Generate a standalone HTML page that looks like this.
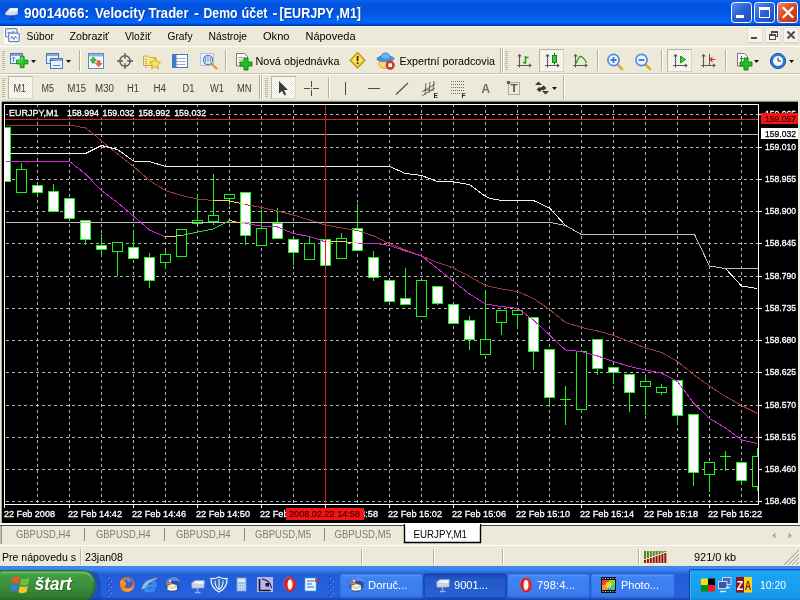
<!DOCTYPE html>
<html lang="sk"><head><meta charset="utf-8"><title>90014066: Velocity Trader - Demo účet - [EURJPY,M1]</title>
<style>html,body{margin:0;padding:0;background:#ece9d8;overflow:hidden}svg{display:block;will-change:transform;transform:translateZ(0)}text{font-family:'Liberation Sans', sans-serif;white-space:pre}</style>
</head><body>
<svg width="800" height="600" viewBox="0 0 800 600">
<defs>
<linearGradient id="gTitle" x1="0" y1="0" x2="0" y2="1">
<stop offset="0" stop-color="#0d62ea"/><stop offset="0.08" stop-color="#075ae6"/><stop offset="0.18" stop-color="#0154e0"/>
<stop offset="0.5" stop-color="#0155e2"/><stop offset="0.68" stop-color="#0260f0"/><stop offset="0.86" stop-color="#0466f8"/><stop offset="0.92" stop-color="#0352e0"/><stop offset="0.97" stop-color="#0238b2"/><stop offset="1" stop-color="#0238b2"/>
</linearGradient>
<linearGradient id="gTask" x1="0" y1="0" x2="0" y2="1">
<stop offset="0" stop-color="#3a7fe6"/><stop offset="0.05" stop-color="#3f8af0"/><stop offset="0.12" stop-color="#3880ea"/><stop offset="0.18" stop-color="#2a6ee0"/>
<stop offset="0.26" stop-color="#245dd8"/><stop offset="0.5" stop-color="#245ddb"/><stop offset="0.86" stop-color="#2562df"/>
<stop offset="0.93" stop-color="#2158d4"/><stop offset="1" stop-color="#1941a5"/>
</linearGradient>
<linearGradient id="gTray" x1="0" y1="0" x2="0" y2="1">
<stop offset="0" stop-color="#168ee4"/><stop offset="0.08" stop-color="#1ba8f6"/><stop offset="0.2" stop-color="#19a2f2"/>
<stop offset="0.6" stop-color="#189ef0"/><stop offset="0.9" stop-color="#1798ea"/><stop offset="1" stop-color="#1282d6"/>
</linearGradient>
<linearGradient id="gStart" x1="0" y1="0" x2="0" y2="1">
<stop offset="0" stop-color="#2f7f2f"/><stop offset="0.08" stop-color="#4fa84c"/><stop offset="0.22" stop-color="#419a41"/>
<stop offset="0.55" stop-color="#3a8e3a"/><stop offset="0.85" stop-color="#317f31"/><stop offset="1" stop-color="#276c27"/>
</linearGradient>
<linearGradient id="gBtnB" x1="0" y1="0" x2="1" y2="1">
<stop offset="0" stop-color="#5b8ef0"/><stop offset="0.5" stop-color="#2a5fd8"/><stop offset="1" stop-color="#1c4cc4"/>
</linearGradient>
<linearGradient id="gBtnR" x1="0" y1="0" x2="1" y2="1">
<stop offset="0" stop-color="#f08a6a"/><stop offset="0.45" stop-color="#dc4a26"/><stop offset="1" stop-color="#b8300e"/>
</linearGradient>
<linearGradient id="gTB" x1="0" y1="0" x2="0" y2="1">
<stop offset="0" stop-color="#5a95f6"/><stop offset="0.15" stop-color="#3f82f2"/><stop offset="0.85" stop-color="#3a7cee"/><stop offset="1" stop-color="#2f68d8"/>
</linearGradient>
<linearGradient id="gTBa" x1="0" y1="0" x2="0" y2="1">
<stop offset="0" stop-color="#1a45ac"/><stop offset="0.2" stop-color="#2258c6"/><stop offset="1" stop-color="#2862d4"/>
</linearGradient>
<pattern id="chk" width="2" height="2" patternUnits="userSpaceOnUse"><rect width="2" height="2" fill="#fff"/><rect width="1" height="1" fill="#ece9d8"/><rect x="1" y="1" width="1" height="1" fill="#ece9d8"/></pattern>
<clipPath id="clipChart"><rect x="5" y="105" width="753" height="399"/></clipPath>
</defs>
<rect x="0" y="0" width="800" height="600" fill="#ece9d8" />
<rect x="0" y="0" width="800" height="26" fill="url(#gTitle)" />
<g>
<path d="M5 13.300 L9.800 8 L18 8 L17.600 14.600 L12 15.600 L5.800 15 Z" fill="#d4dcea"/>
<path d="M8 11.500 L11 8.300 L17.700 8.300 L17.500 11 Z" fill="#f6f8fc"/>
<path d="M5.500 12 L9 8.200 L6.500 8.200 Z" fill="#2a5fd0" opacity="0.5"/>
<path d="M12 15.500 L12 18.500 M9 19.300 L15.300 19.300" stroke="#163c9e" stroke-width="1.400" fill="none"/>
</g>
<text x="25" y="18.8" font-size="14" fill="#0a2a8a" textLength="65" lengthAdjust="spacingAndGlyphs" font-weight="bold" opacity="0.55">90014066:</text>
<text x="24" y="17.8" font-size="14" fill="#ffffff" textLength="65" lengthAdjust="spacingAndGlyphs" font-weight="bold">90014066:</text>
<text x="96" y="18.8" font-size="14" fill="#0a2a8a" textLength="50" lengthAdjust="spacingAndGlyphs" font-weight="bold" opacity="0.55">Velocity</text>
<text x="95" y="17.8" font-size="14" fill="#ffffff" textLength="50" lengthAdjust="spacingAndGlyphs" font-weight="bold">Velocity</text>
<text x="149.5" y="18.8" font-size="14" fill="#0a2a8a" textLength="40.0" lengthAdjust="spacingAndGlyphs" font-weight="bold" opacity="0.55">Trader</text>
<text x="148.5" y="17.8" font-size="14" fill="#ffffff" textLength="40.0" lengthAdjust="spacingAndGlyphs" font-weight="bold">Trader</text>
<text x="195" y="18.8" font-size="14" fill="#0a2a8a" textLength="5" lengthAdjust="spacingAndGlyphs" font-weight="bold" opacity="0.55">-</text>
<text x="194" y="17.8" font-size="14" fill="#ffffff" textLength="5" lengthAdjust="spacingAndGlyphs" font-weight="bold">-</text>
<text x="204.5" y="18.8" font-size="14" fill="#0a2a8a" textLength="34.0" lengthAdjust="spacingAndGlyphs" font-weight="bold" opacity="0.55">Demo</text>
<text x="203.5" y="17.8" font-size="14" fill="#ffffff" textLength="34.0" lengthAdjust="spacingAndGlyphs" font-weight="bold">Demo</text>
<text x="242.5" y="18.8" font-size="14" fill="#0a2a8a" textLength="26.0" lengthAdjust="spacingAndGlyphs" font-weight="bold" opacity="0.55">účet</text>
<text x="241.5" y="17.8" font-size="14" fill="#ffffff" textLength="26.0" lengthAdjust="spacingAndGlyphs" font-weight="bold">účet</text>
<text x="273.5" y="18.8" font-size="14" fill="#0a2a8a" textLength="5.0" lengthAdjust="spacingAndGlyphs" font-weight="bold" opacity="0.55">-</text>
<text x="272.5" y="17.8" font-size="14" fill="#ffffff" textLength="5.0" lengthAdjust="spacingAndGlyphs" font-weight="bold">-</text>
<text x="280.5" y="18.8" font-size="14" fill="#0a2a8a" textLength="54.5" lengthAdjust="spacingAndGlyphs" font-weight="bold" opacity="0.55">[EURJPY</text>
<text x="279.5" y="17.8" font-size="14" fill="#ffffff" textLength="54.5" lengthAdjust="spacingAndGlyphs" font-weight="bold">[EURJPY</text>
<text x="337" y="18.8" font-size="14" fill="#0a2a8a" textLength="25" lengthAdjust="spacingAndGlyphs" font-weight="bold" opacity="0.55">,M1]</text>
<text x="336" y="17.8" font-size="14" fill="#ffffff" textLength="25" lengthAdjust="spacingAndGlyphs" font-weight="bold">,M1]</text>
<rect x="731.5" y="2.5" width="20" height="20" rx="3" ry="3" fill="url(#gBtnB)" stroke="#ffffff" stroke-width="1"/>
<rect x="736" y="15" width="8" height="3" fill="#ffffff" />
<rect x="754.5" y="2.5" width="20" height="20" rx="3" ry="3" fill="url(#gBtnB)" stroke="#ffffff" stroke-width="1"/>
<rect x="759.5" y="8" width="10" height="9.5" fill="none" stroke="#ffffff" stroke-width="1"/>
<rect x="759" y="7" width="11" height="3" fill="#ffffff" />
<rect x="777.5" y="2.5" width="20" height="20" rx="3" ry="3" fill="url(#gBtnR)" stroke="#ffffff" stroke-width="1"/>
<path d="M783.5 8 L792.5 17 M792.5 8 L783.5 17" stroke="#ffffff" stroke-width="2.2" stroke-linecap="square"/>
<rect x="0" y="26" width="800" height="20" fill="#ece9d8" />
<rect x="0" y="26" width="800" height="1" fill="#f4f4f0" />
<rect x="0" y="46" width="800" height="1" fill="#ffffff" />
<rect x="4" y="27" width="16" height="17" fill="#fbfbf8" />
<g fill="#f4f7fd" stroke="#6486c4" stroke-width="1.200">
<rect x="5.600" y="28.600" width="11.500" height="8.400" rx="1"/><rect x="8.600" y="33.200" width="10.600" height="8.400" rx="1"/>
</g>
<path d="M7.500 32.500 h3 M12 31 l1.200 2 l1.200 -2" stroke="#5476b8" stroke-width="0.800" fill="none"/>
<path d="M10.500 38.500 l1.600 -2 l1.600 3 l1.600 -3 l1.600 2" stroke="#3f62aa" stroke-width="0.900" fill="none"/>
<text x="26.5" y="39.6" font-size="11.2" fill="#000" textLength="27.5" lengthAdjust="spacingAndGlyphs">Súbor</text>
<text x="69.5" y="39.6" font-size="11.2" fill="#000" textLength="39.5" lengthAdjust="spacingAndGlyphs">Zobraziť</text>
<text x="125" y="39.6" font-size="11.2" fill="#000" textLength="26" lengthAdjust="spacingAndGlyphs">Vložiť</text>
<text x="167.5" y="39.6" font-size="11.2" fill="#000" textLength="25.0" lengthAdjust="spacingAndGlyphs">Grafy</text>
<text x="208.5" y="39.6" font-size="11.2" fill="#000" textLength="38.5" lengthAdjust="spacingAndGlyphs">Nástroje</text>
<text x="263" y="39.6" font-size="11.2" fill="#000" textLength="26.5" lengthAdjust="spacingAndGlyphs">Okno</text>
<text x="305.5" y="39.6" font-size="11.2" fill="#000" textLength="50.0" lengthAdjust="spacingAndGlyphs">Nápoveda</text>
<rect x="747.5" y="27.5" width="15" height="15" rx="1" fill="#f5f4ec" stroke="#e0ddce" stroke-width="1"/>
<line x1="748" y1="43" x2="763" y2="43" stroke="#d2cebc" stroke-width="1" />
<rect x="751" y="37" width="6" height="2" fill="#4c4c4c" />
<rect x="765.5" y="27.5" width="15" height="15" rx="1" fill="#f5f4ec" stroke="#e0ddce" stroke-width="1"/>
<line x1="766" y1="43" x2="781" y2="43" stroke="#d2cebc" stroke-width="1" />
<g fill="none" stroke="#4c4c4c" stroke-width="1"><rect x="771.5" y="31.5" width="6" height="5"/><rect x="769.5" y="34.5" width="6" height="5" fill="#f5f4ec"/></g>
<rect x="771" y="31" width="7" height="2" fill="#4c4c4c" />
<rect x="769" y="34" width="7" height="2" fill="#4c4c4c" />
<rect x="783.5" y="27.5" width="15" height="15" rx="1" fill="#f5f4ec" stroke="#e0ddce" stroke-width="1"/>
<line x1="784" y1="43" x2="799" y2="43" stroke="#d2cebc" stroke-width="1" />
<path d="M787.5 31.5 L794.5 38.5 M794.5 31.5 L787.5 38.5" stroke="#4c4c4c" stroke-width="2"/>
<rect x="0" y="47" width="800" height="26" fill="#ece9d8" />
<rect x="0" y="73" width="800" height="1" fill="#c9c5b4" />
<rect x="0" y="74" width="800" height="1" fill="#ffffff" />
<rect x="0" y="75" width="800" height="24" fill="#ece9d8" />
<rect x="2" y="51" width="3" height="1" fill="#bdb9a8" />
<rect x="2" y="53" width="3" height="1" fill="#bdb9a8" />
<rect x="2" y="55" width="3" height="1" fill="#bdb9a8" />
<rect x="2" y="57" width="3" height="1" fill="#bdb9a8" />
<rect x="2" y="59" width="3" height="1" fill="#bdb9a8" />
<rect x="2" y="61" width="3" height="1" fill="#bdb9a8" />
<rect x="2" y="63" width="3" height="1" fill="#bdb9a8" />
<rect x="2" y="65" width="3" height="1" fill="#bdb9a8" />
<rect x="2" y="67" width="3" height="1" fill="#bdb9a8" />
<rect x="2" y="69" width="3" height="1" fill="#bdb9a8" />
<g><rect x="10.5" y="53.5" width="12" height="10" fill="#e8f0fa" stroke="#4b78b8"/><rect x="11" y="54" width="11" height="2" fill="#7da7dd"/>
<path d="M13.5 57 v5 M12 58.5 l1.5 -1.5 l1.5 1.5" stroke="#4b78b8" fill="none" stroke-width="0.9"/>
<path d="M20 58 h4 v4 h4 v4 h-4 v4 h-4 v-4 h-4 v-4 h4 z" transform="translate(22.2,62) scale(0.95) translate(-22,-64)" fill="#2cc62c" stroke="#118011" stroke-width="0.9"/><path d="M20.800 57 h1.800 v3.500 h-1.800 z M17 60.800 h3.800 v1.400 h-3.800 z" fill="#7cea7c" opacity="0.8"/></g>
<path d="M31 60 h5 l-2.5 3 z" fill="#111"/>
<g fill="#e8f0fa" stroke="#4b78b8"><rect x="46.5" y="53.5" width="12" height="10"/><rect x="50.5" y="58.5" width="12" height="10"/></g>
<rect x="47" y="54" width="11" height="2" fill="#7da7dd" />
<rect x="51" y="59" width="11" height="2" fill="#7da7dd" />
<path d="M49 60.5 h6 M53 65.5 h7" stroke="#4b78b8" stroke-width="0.9"/>
<path d="M66 60 h5 l-2.5 3 z" fill="#111"/>
<rect x="79" y="50" width="1" height="21" fill="#b4b09e" />
<rect x="80" y="50" width="1" height="21" fill="#ffffff" />
<g><rect x="88.5" y="53.5" width="15" height="15" fill="#f4f8fd" stroke="#5c8ac8"/><rect x="89" y="54" width="14" height="2.5" fill="#8db2e2"/>
<path d="M93.3 57 l3.2 3.400 h-1.800 v2.600 h-2.800 v-2.600 h-1.800 z" fill="#3cc03c" stroke="#1a8a1a" stroke-width="0.6"/>
<path d="M98.700 66.800 l3.200 -3.400 h-1.800 v-2.600 h-2.800 v2.600 h-1.800 z" fill="#f46a48" stroke="#b83a20" stroke-width="0.6"/></g>
<g fill="none" stroke="#5a5a5a"><circle cx="125" cy="61" r="5.2" stroke-width="1.4"/><path d="M125 53 v6 M125 63 v6 M117 61 h6 M127 61 h6" stroke-width="1.3"/></g>
<g><path d="M143.500 56 h5 l1.500 1.500 h6 v8 h-12.500 z" fill="#f8e690" stroke="#c9a33a" stroke-width="0.9"/>
<path d="M146 59 v9" stroke="#6a6a6a" stroke-width="0.8" stroke-dasharray="1 1"/>
<path d="M155 58 l1.700 3.600 l3.900 0.500 l-2.900 2.700 l0.800 3.900 l-3.500 -1.900 l-3.500 1.900 l0.800 -3.900 l-2.900 -2.700 l3.900 -0.500 z" fill="#fbe24a" stroke="#c79a2a" stroke-width="0.8"/></g>
<g><rect x="172.500" y="54.500" width="15" height="13" fill="#fdfdfd" stroke="#4a78b8"/><rect x="173" y="55" width="3.500" height="12" fill="#3b78d0"/>
<path d="M178.500 58.500 h7 M178.500 61.500 h7 M178.500 64.500 h7" stroke="#8f9fb8" stroke-width="0.9"/><path d="M177 58.500 h1 M177 61.500 h1 M177 64.500 h1" stroke="#d04040" stroke-width="1"/></g>
<g><rect x="200.500" y="53.500" width="13" height="12" fill="#eef3fa" stroke="#a9b8d0" stroke-width="0.8"/>
<circle cx="208" cy="60" r="4.600" fill="#dbe9fb" fill-opacity="0.8" stroke="#5a82c0" stroke-width="1.300"/>
<path d="M205.500 57 v5 M208 56 v6 M210.500 57.500 v4" stroke="#4a6ea8" stroke-width="0.8"/>
<path d="M211.500 63.500 l5 5" stroke="#d2a23a" stroke-width="2.200" stroke-linecap="round"/></g>
<rect x="225" y="50" width="1" height="21" fill="#b4b09e" />
<rect x="226" y="50" width="1" height="21" fill="#ffffff" />
<g><path d="M236.500 53.500 h8 l3 3 v9.500 h-11 z" fill="#fbfbfb" stroke="#6a6a6a" stroke-width="0.9"/><path d="M238.500 57.500 h5 M238.500 60 h6 M238.500 62.500 h4" stroke="#8a8a8a" stroke-width="0.9"/>
<path d="M245 60 h4 v4 h4 v4 h-4 v4 h-4 v-4 h-4 v-4 h4 z" transform="translate(-1,-2)" fill="#22c022" stroke="#0f7a0f" stroke-width="0.9"/></g>
<text x="255.5" y="65" font-size="11.2" fill="#000" textLength="84" lengthAdjust="spacingAndGlyphs">Nová objednávka</text>
<g><path d="M357.500 52.500 l7.500 7.700 l-7.500 7.700 l-7.500 -7.700 z" fill="#f6d23a" stroke="#b88a10" stroke-width="1.100"/><path d="M357.500 55.500 l5 4.700 l-5 4.700 l-5 -4.700 z" fill="#fbe675"/>
<rect x="356.7" y="56" width="1.8" height="5.2" fill="#3a2a00" />
<rect x="356.7" y="62.3" width="1.8" height="1.8" fill="#3a2a00" />
</g>
<g><circle cx="384.500" cy="62.800" r="5.600" fill="#f8dc72" stroke="#c79a2a" stroke-width="0.8"/>
<ellipse cx="385.500" cy="58.800" rx="8.600" ry="2.900" fill="#4a9be6" stroke="#2a6ab8" stroke-width="0.7"/><path d="M380.500 58.500 q0.500 -5.500 5 -5.500 q4.500 0 5 5.500 q-5 1.800 -10 0 z" fill="#6ab4f4" stroke="#2a6ab8" stroke-width="0.7"/>
<circle cx="390.200" cy="65.200" r="4.200" fill="#e23a1e" stroke="#a02010" stroke-width="0.6"/><rect x="388.400" y="63.400" width="3.600" height="3.600" fill="#fff"/></g>
<text x="399.5" y="65" font-size="11.2" fill="#000" textLength="95.5" lengthAdjust="spacingAndGlyphs">Expertní poradcovia</text>
<rect x="500" y="48" width="1" height="25" fill="#b4b09e" />
<rect x="501" y="48" width="1" height="25" fill="#ffffff" />
<rect x="502" y="48" width="1" height="25" fill="#b4b09e" />
<rect x="503" y="48" width="1" height="25" fill="#ffffff" />
<rect x="505" y="51" width="3" height="1" fill="#bdb9a8" />
<rect x="505" y="53" width="3" height="1" fill="#bdb9a8" />
<rect x="505" y="55" width="3" height="1" fill="#bdb9a8" />
<rect x="505" y="57" width="3" height="1" fill="#bdb9a8" />
<rect x="505" y="59" width="3" height="1" fill="#bdb9a8" />
<rect x="505" y="61" width="3" height="1" fill="#bdb9a8" />
<rect x="505" y="63" width="3" height="1" fill="#bdb9a8" />
<rect x="505" y="65" width="3" height="1" fill="#bdb9a8" />
<rect x="505" y="67" width="3" height="1" fill="#bdb9a8" />
<rect x="505" y="69" width="3" height="1" fill="#bdb9a8" />
<path d="M519.5 54.5 v13 M517 65.5 h14 M517.8 56.5 l1.700 -2 l1.700 2 M529 63.8 l2 1.700 l-2 1.700" stroke="#5a5a5a" stroke-width="1.100" fill="none"/>
<path d="M525.500 56 v8 M525.500 57.500 h3 M523 62.500 h2.500" stroke="#1fa01f" stroke-width="1.500" fill="none"/>
<rect x="539.5" y="49.5" width="24" height="22" fill="url(#chk)" stroke="#d9d6c8" stroke-width="1"/>
<line x1="539" y1="49.5" x2="564" y2="49.5" stroke="#b9b5a4" stroke-width="1" />
<line x1="539.5" y1="49" x2="539.5" y2="72" stroke="#b9b5a4" stroke-width="1" />
<path d="M547.5 54.5 v13 M545 65.5 h14 M545.8 56.5 l1.700 -2 l1.700 2 M557 63.8 l2 1.700 l-2 1.700" stroke="#5a5a5a" stroke-width="1.100" fill="none"/>
<path d="M554.500 53 v11.500" stroke="#0f7a0f" stroke-width="1"/><rect x="552.500" y="55.500" width="4" height="7" fill="#2ad02a" stroke="#0f7a0f" stroke-width="0.9"/>
<path d="M575.5 54.5 v13 M573 65.5 h14 M573.8 56.5 l1.700 -2 l1.700 2 M585 63.8 l2 1.700 l-2 1.700" stroke="#5a5a5a" stroke-width="1.100" fill="none"/>
<path d="M576 63.500 q3.500 -9 6 -6.500 q2.500 1.500 4.500 6" stroke="#1fa01f" stroke-width="1.400" fill="none"/>
<rect x="597" y="50" width="1" height="21" fill="#b4b09e" />
<rect x="598" y="50" width="1" height="21" fill="#ffffff" />
<path d="M617.0 64 l5 5" stroke="#d9ad3c" stroke-width="2.600" stroke-linecap="round"/>
<circle cx="613.5" cy="60" r="5.600" fill="#eaf3ff" stroke="#4c8ae2" stroke-width="1.600"/>
<path d="M610.5 60 h6 M613.5 57 v6" stroke="#3a78d8" stroke-width="1.800"/>
<path d="M645.0 64 l5 5" stroke="#d9ad3c" stroke-width="2.600" stroke-linecap="round"/>
<circle cx="641.5" cy="60" r="5.600" fill="#eaf3ff" stroke="#4c8ae2" stroke-width="1.600"/>
<path d="M638.5 60 h6" stroke="#3a78d8" stroke-width="1.800"/>
<rect x="661" y="50" width="1" height="21" fill="#b4b09e" />
<rect x="662" y="50" width="1" height="21" fill="#ffffff" />
<rect x="667.5" y="49.5" width="24" height="22" fill="url(#chk)" stroke="#d9d6c8" stroke-width="1"/>
<line x1="667" y1="49.5" x2="692" y2="49.5" stroke="#b9b5a4" stroke-width="1" />
<line x1="667.5" y1="49" x2="667.5" y2="72" stroke="#b9b5a4" stroke-width="1" />
<path d="M675.5 54.5 v13 M673 65.5 h14 M673.8 56.5 l1.700 -2 l1.700 2 M685 63.8 l2 1.700 l-2 1.700" stroke="#5a5a5a" stroke-width="1.100" fill="none"/>
<path d="M680.500 56 v7 l5 -3.500 z" fill="#3ad03a" stroke="#0f8a0f" stroke-width="0.9"/>
<path d="M703.5 54.5 v13 M701 65.5 h14 M701.8 56.5 l1.700 -2 l1.700 2 M713 63.8 l2 1.700 l-2 1.700" stroke="#5a5a5a" stroke-width="1.100" fill="none"/>
<path d="M709.500 54 v11" stroke="#5a5a5a" stroke-width="1"/><path d="M715.500 59.500 h-5 M712.500 57.300 l-2.500 2.200 l2.500 2.200" stroke="#d23a1a" stroke-width="1.200" fill="none"/>
<rect x="725" y="50" width="1" height="21" fill="#b4b09e" />
<rect x="726" y="50" width="1" height="21" fill="#ffffff" />
<g><path d="M737.500 53.500 h7 l3 3 v9.500 h-10 z" fill="#fbfbfb" stroke="#6a6a6a" stroke-width="0.9"/><path d="M741.500 56 v8 M740 58.500 h3" stroke="#555" stroke-width="0.9" fill="none"/>
<path d="M745 60 h4 v4 h4 v4 h-4 v4 h-4 v-4 h-4 v-4 h4 z" transform="translate(-1,-2)" fill="#22c022" stroke="#0f7a0f" stroke-width="0.9"/></g>
<path d="M754 60 h5 l-2.5 3 z" fill="#111"/>
<g><circle cx="778" cy="61" r="7.600" fill="#2f78d8" stroke="#1c4fa8" stroke-width="1"/><circle cx="778" cy="61" r="5" fill="#f4f8ff"/><path d="M778 57.500 v3.500 h3" stroke="#333" stroke-width="1" fill="none"/></g>
<path d="M789 60 h5 l-2.5 3 z" fill="#111"/>
<rect x="2" y="78" width="3" height="1" fill="#bdb9a8" />
<rect x="2" y="80" width="3" height="1" fill="#bdb9a8" />
<rect x="2" y="82" width="3" height="1" fill="#bdb9a8" />
<rect x="2" y="84" width="3" height="1" fill="#bdb9a8" />
<rect x="2" y="86" width="3" height="1" fill="#bdb9a8" />
<rect x="2" y="88" width="3" height="1" fill="#bdb9a8" />
<rect x="2" y="90" width="3" height="1" fill="#bdb9a8" />
<rect x="2" y="92" width="3" height="1" fill="#bdb9a8" />
<rect x="2" y="94" width="3" height="1" fill="#bdb9a8" />
<rect x="2" y="96" width="3" height="1" fill="#bdb9a8" />
<rect x="8.5" y="76.5" width="24" height="22" fill="url(#chk)" stroke="#d9d6c8" stroke-width="1"/>
<line x1="8" y1="76.5" x2="33" y2="76.5" stroke="#b9b5a4" stroke-width="1" />
<line x1="8.5" y1="76" x2="8.5" y2="99" stroke="#b9b5a4" stroke-width="1" />
<text x="13.5" y="91.7" font-size="10" fill="#3c3c3c" textLength="12.5" lengthAdjust="spacingAndGlyphs">M1</text>
<text x="41.5" y="91.7" font-size="10" fill="#3c3c3c" textLength="12.5" lengthAdjust="spacingAndGlyphs">M5</text>
<text x="67.5" y="91.7" font-size="10" fill="#3c3c3c" textLength="18.5" lengthAdjust="spacingAndGlyphs">M15</text>
<text x="95" y="91.7" font-size="10" fill="#3c3c3c" textLength="19" lengthAdjust="spacingAndGlyphs">M30</text>
<text x="127" y="91.7" font-size="10" fill="#3c3c3c" textLength="12" lengthAdjust="spacingAndGlyphs">H1</text>
<text x="153.5" y="91.7" font-size="10" fill="#3c3c3c" textLength="12.5" lengthAdjust="spacingAndGlyphs">H4</text>
<text x="182.5" y="91.7" font-size="10" fill="#3c3c3c" textLength="12.0" lengthAdjust="spacingAndGlyphs">D1</text>
<text x="210" y="91.7" font-size="10" fill="#3c3c3c" textLength="14" lengthAdjust="spacingAndGlyphs">W1</text>
<text x="237" y="91.7" font-size="10" fill="#3c3c3c" textLength="14.5" lengthAdjust="spacingAndGlyphs">MN</text>
<rect x="259" y="75" width="1" height="24" fill="#b4b09e" />
<rect x="260" y="75" width="1" height="24" fill="#ffffff" />
<rect x="261" y="75" width="1" height="24" fill="#b4b09e" />
<rect x="262" y="75" width="1" height="24" fill="#ffffff" />
<rect x="265" y="78" width="3" height="1" fill="#bdb9a8" />
<rect x="265" y="80" width="3" height="1" fill="#bdb9a8" />
<rect x="265" y="82" width="3" height="1" fill="#bdb9a8" />
<rect x="265" y="84" width="3" height="1" fill="#bdb9a8" />
<rect x="265" y="86" width="3" height="1" fill="#bdb9a8" />
<rect x="265" y="88" width="3" height="1" fill="#bdb9a8" />
<rect x="265" y="90" width="3" height="1" fill="#bdb9a8" />
<rect x="265" y="92" width="3" height="1" fill="#bdb9a8" />
<rect x="265" y="94" width="3" height="1" fill="#bdb9a8" />
<rect x="265" y="96" width="3" height="1" fill="#bdb9a8" />
<rect x="271.5" y="76.5" width="24" height="22" fill="url(#chk)" stroke="#d9d6c8" stroke-width="1"/>
<line x1="271" y1="76.5" x2="296" y2="76.5" stroke="#b9b5a4" stroke-width="1" />
<line x1="271.5" y1="76" x2="271.5" y2="99" stroke="#b9b5a4" stroke-width="1" />
<path d="M279 81 v12.500 l3 -2.800 l2.300 4.800 l1.900 -0.900 l-2.300 -4.700 h4.100 z" fill="#3a3a3a"/>
<path d="M311.500 81 v6 M311.500 90 v6 M304 88.500 h6 M313 88.500 h6 M311 88.500 h1" stroke="#4a4a4a" stroke-width="1"/>
<rect x="328" y="77" width="1" height="21" fill="#b4b09e" />
<rect x="329" y="77" width="1" height="21" fill="#ffffff" />
<line x1="345.5" y1="82" x2="345.5" y2="95" stroke="#4a4a4a" stroke-width="1" />
<line x1="368" y1="88.5" x2="380" y2="88.5" stroke="#4a4a4a" stroke-width="1" />
<line x1="396" y1="94.5" x2="408" y2="83" stroke="#4a4a4a" stroke-width="1.1" />
<path d="M422 92 l13 -8 M422 96 l13 -8 M426 83 l-1 12 M430 82 l-1 11 M434 81 l-1 9 M424 90 h10" stroke="#5a5a5a" stroke-width="0.9" fill="none"/>
<text x="433.5" y="97.5" font-size="6.5" fill="#222" font-weight="bold">E</text>
<line x1="451" y1="81.5" x2="464" y2="81.5" stroke="#6a6a6a" stroke-width="1" stroke-dasharray="1 1"/>
<line x1="451" y1="84.5" x2="464" y2="84.5" stroke="#6a6a6a" stroke-width="1" stroke-dasharray="1 1"/>
<line x1="451" y1="87.5" x2="464" y2="87.5" stroke="#6a6a6a" stroke-width="1" stroke-dasharray="1 1"/>
<line x1="451" y1="90.5" x2="464" y2="90.5" stroke="#6a6a6a" stroke-width="1" stroke-dasharray="1 1"/>
<line x1="451" y1="93.5" x2="460" y2="93.5" stroke="#6a6a6a" stroke-width="1" stroke-dasharray="1 1"/>
<text x="461.5" y="97.5" font-size="6.5" fill="#222" font-weight="bold">F</text>
<text x="481.5" y="92.6" font-size="12.5" fill="#6c6c6c" textLength="8.5" lengthAdjust="spacingAndGlyphs" font-weight="bold">A</text>
<rect x="508.500" y="82.500" width="11" height="12" fill="none" stroke="#6a6a6a" stroke-dasharray="1 1"/>
<rect x="507" y="81" width="3" height="3" fill="#5a5a5a" />
<text x="510.2" y="92.3" font-size="10.5" fill="#5a5a5a" textLength="7.6" lengthAdjust="spacingAndGlyphs" font-weight="bold">T</text>
<path d="M535 85 l3.500 -3.500 l3.500 3.500 z M542 91 l3.500 3.500 l3.500 -3.500 z" fill="#3a3a3a"/><path d="M537 89 l3 -2.500 l3 2.500 l-3 2.500 z M541 87.500 l3 -2.500 l3 2.500 l-3 2.500 z" fill="#3a3a3a" transform="translate(-0.500,0.500)"/>
<path d="M552 87 h5 l-2.5 3 z" fill="#111"/>
<rect x="563" y="75" width="1" height="24" fill="#b4b09e" />
<rect x="564" y="75" width="1" height="24" fill="#ffffff" />
<rect x="0" y="99" width="800" height="1" fill="#ece9d8" />
<rect x="0" y="100" width="800" height="1" fill="#dad7c7" />
<rect x="0" y="101" width="800" height="1" fill="#8f8d80" />
<rect x="2" y="102" width="796" height="421" fill="#000000" />
<rect x="0" y="101" width="2" height="424" fill="#ece9d8" />
<rect x="1" y="102" width="1" height="422" fill="#aca899" />
<rect x="798" y="101" width="2" height="424" fill="#ece9d8" />
<rect x="0" y="523" width="800" height="2" fill="#ffffff" />
<g shape-rendering="crispEdges">
<line x1="5" y1="114.5" x2="758" y2="114.5" stroke="#b2b2b2" stroke-width="1" stroke-dasharray="3 3" stroke-dashoffset="5"/>
<line x1="5" y1="147.5" x2="758" y2="147.5" stroke="#b2b2b2" stroke-width="1" stroke-dasharray="3 3" stroke-dashoffset="5"/>
<line x1="5" y1="179.5" x2="758" y2="179.5" stroke="#b2b2b2" stroke-width="1" stroke-dasharray="3 3" stroke-dashoffset="5"/>
<line x1="5" y1="211.5" x2="758" y2="211.5" stroke="#b2b2b2" stroke-width="1" stroke-dasharray="3 3" stroke-dashoffset="5"/>
<line x1="5" y1="243.5" x2="758" y2="243.5" stroke="#b2b2b2" stroke-width="1" stroke-dasharray="3 3" stroke-dashoffset="5"/>
<line x1="5" y1="276.5" x2="758" y2="276.5" stroke="#b2b2b2" stroke-width="1" stroke-dasharray="3 3" stroke-dashoffset="5"/>
<line x1="5" y1="308.5" x2="758" y2="308.5" stroke="#b2b2b2" stroke-width="1" stroke-dasharray="3 3" stroke-dashoffset="5"/>
<line x1="5" y1="340.5" x2="758" y2="340.5" stroke="#b2b2b2" stroke-width="1" stroke-dasharray="3 3" stroke-dashoffset="5"/>
<line x1="5" y1="372.5" x2="758" y2="372.5" stroke="#b2b2b2" stroke-width="1" stroke-dasharray="3 3" stroke-dashoffset="5"/>
<line x1="5" y1="405.5" x2="758" y2="405.5" stroke="#b2b2b2" stroke-width="1" stroke-dasharray="3 3" stroke-dashoffset="5"/>
<line x1="5" y1="437.5" x2="758" y2="437.5" stroke="#b2b2b2" stroke-width="1" stroke-dasharray="3 3" stroke-dashoffset="5"/>
<line x1="5" y1="469.5" x2="758" y2="469.5" stroke="#b2b2b2" stroke-width="1" stroke-dasharray="3 3" stroke-dashoffset="5"/>
<line x1="5" y1="501.5" x2="758" y2="501.5" stroke="#b2b2b2" stroke-width="1" stroke-dasharray="3 3" stroke-dashoffset="5"/>
<line x1="37.5" y1="105" x2="37.5" y2="504" stroke="#b2b2b2" stroke-width="1" stroke-dasharray="3 3" stroke-dashoffset="1"/>
<line x1="69.5" y1="105" x2="69.5" y2="504" stroke="#b2b2b2" stroke-width="1" stroke-dasharray="3 3" stroke-dashoffset="1"/>
<line x1="101.5" y1="105" x2="101.5" y2="504" stroke="#b2b2b2" stroke-width="1" stroke-dasharray="3 3" stroke-dashoffset="1"/>
<line x1="133.5" y1="105" x2="133.5" y2="504" stroke="#b2b2b2" stroke-width="1" stroke-dasharray="3 3" stroke-dashoffset="1"/>
<line x1="165.5" y1="105" x2="165.5" y2="504" stroke="#b2b2b2" stroke-width="1" stroke-dasharray="3 3" stroke-dashoffset="1"/>
<line x1="197.5" y1="105" x2="197.5" y2="504" stroke="#b2b2b2" stroke-width="1" stroke-dasharray="3 3" stroke-dashoffset="1"/>
<line x1="229.5" y1="105" x2="229.5" y2="504" stroke="#b2b2b2" stroke-width="1" stroke-dasharray="3 3" stroke-dashoffset="1"/>
<line x1="261.5" y1="105" x2="261.5" y2="504" stroke="#b2b2b2" stroke-width="1" stroke-dasharray="3 3" stroke-dashoffset="1"/>
<line x1="293.5" y1="105" x2="293.5" y2="504" stroke="#b2b2b2" stroke-width="1" stroke-dasharray="3 3" stroke-dashoffset="1"/>
<line x1="325.5" y1="105" x2="325.5" y2="504" stroke="#b2b2b2" stroke-width="1" stroke-dasharray="3 3" stroke-dashoffset="1"/>
<line x1="357.5" y1="105" x2="357.5" y2="504" stroke="#b2b2b2" stroke-width="1" stroke-dasharray="3 3" stroke-dashoffset="1"/>
<line x1="389.5" y1="105" x2="389.5" y2="504" stroke="#b2b2b2" stroke-width="1" stroke-dasharray="3 3" stroke-dashoffset="1"/>
<line x1="421.5" y1="105" x2="421.5" y2="504" stroke="#b2b2b2" stroke-width="1" stroke-dasharray="3 3" stroke-dashoffset="1"/>
<line x1="453.5" y1="105" x2="453.5" y2="504" stroke="#b2b2b2" stroke-width="1" stroke-dasharray="3 3" stroke-dashoffset="1"/>
<line x1="485.5" y1="105" x2="485.5" y2="504" stroke="#b2b2b2" stroke-width="1" stroke-dasharray="3 3" stroke-dashoffset="1"/>
<line x1="517.5" y1="105" x2="517.5" y2="504" stroke="#b2b2b2" stroke-width="1" stroke-dasharray="3 3" stroke-dashoffset="1"/>
<line x1="549.5" y1="105" x2="549.5" y2="504" stroke="#b2b2b2" stroke-width="1" stroke-dasharray="3 3" stroke-dashoffset="1"/>
<line x1="581.5" y1="105" x2="581.5" y2="504" stroke="#b2b2b2" stroke-width="1" stroke-dasharray="3 3" stroke-dashoffset="1"/>
<line x1="613.5" y1="105" x2="613.5" y2="504" stroke="#b2b2b2" stroke-width="1" stroke-dasharray="3 3" stroke-dashoffset="1"/>
<line x1="645.5" y1="105" x2="645.5" y2="504" stroke="#b2b2b2" stroke-width="1" stroke-dasharray="3 3" stroke-dashoffset="1"/>
<line x1="677.5" y1="105" x2="677.5" y2="504" stroke="#b2b2b2" stroke-width="1" stroke-dasharray="3 3" stroke-dashoffset="1"/>
<line x1="709.5" y1="105" x2="709.5" y2="504" stroke="#b2b2b2" stroke-width="1" stroke-dasharray="3 3" stroke-dashoffset="1"/>
<line x1="741.5" y1="105" x2="741.5" y2="504" stroke="#b2b2b2" stroke-width="1" stroke-dasharray="3 3" stroke-dashoffset="1"/>
</g>
<g shape-rendering="crispEdges">
<line x1="5" y1="134.5" x2="758" y2="134.5" stroke="#b8b8b8" stroke-width="1" />
<line x1="5" y1="119.5" x2="758" y2="119.5" stroke="#d82424" stroke-width="1" />
</g>
<g clip-path="url(#clipChart)">
<g shape-rendering="crispEdges">
<rect x="0.5" y="127.5" width="10" height="54" fill="#ffffff" stroke="#18f418" stroke-width="1"/>
<line x1="21.5" y1="163" x2="21.5" y2="169" stroke="#18f418" stroke-width="1" />
<rect x="16.5" y="169.5" width="10" height="23" fill="#000000" stroke="#18f418" stroke-width="1"/>
<line x1="37.5" y1="192" x2="37.5" y2="196" stroke="#18f418" stroke-width="1" />
<rect x="32.5" y="185.5" width="10" height="7" fill="#ffffff" stroke="#18f418" stroke-width="1"/>
<line x1="53.5" y1="184" x2="53.5" y2="191" stroke="#18f418" stroke-width="1" />
<rect x="48.5" y="191.5" width="10" height="20" fill="#ffffff" stroke="#18f418" stroke-width="1"/>
<rect x="64.5" y="198.5" width="10" height="20" fill="#ffffff" stroke="#18f418" stroke-width="1"/>
<line x1="85.5" y1="239" x2="85.5" y2="245" stroke="#18f418" stroke-width="1" />
<rect x="80.5" y="220.5" width="10" height="19" fill="#ffffff" stroke="#18f418" stroke-width="1"/>
<line x1="101.5" y1="234" x2="101.5" y2="245" stroke="#18f418" stroke-width="1" />
<line x1="101.5" y1="249" x2="101.5" y2="257" stroke="#18f418" stroke-width="1" />
<rect x="96.5" y="245.5" width="10" height="4" fill="#ffffff" stroke="#18f418" stroke-width="1"/>
<line x1="117.5" y1="251" x2="117.5" y2="276" stroke="#18f418" stroke-width="1" />
<rect x="112.5" y="242.5" width="10" height="9" fill="#000000" stroke="#18f418" stroke-width="1"/>
<line x1="133.5" y1="230" x2="133.5" y2="247" stroke="#18f418" stroke-width="1" />
<rect x="128.5" y="247.5" width="10" height="11" fill="#ffffff" stroke="#18f418" stroke-width="1"/>
<line x1="149.5" y1="253" x2="149.5" y2="257" stroke="#18f418" stroke-width="1" />
<line x1="149.5" y1="280" x2="149.5" y2="288" stroke="#18f418" stroke-width="1" />
<rect x="144.5" y="257.5" width="10" height="23" fill="#ffffff" stroke="#18f418" stroke-width="1"/>
<line x1="165.5" y1="249" x2="165.5" y2="254" stroke="#18f418" stroke-width="1" />
<line x1="165.5" y1="262" x2="165.5" y2="269" stroke="#18f418" stroke-width="1" />
<rect x="160.5" y="254.5" width="10" height="8" fill="#000000" stroke="#18f418" stroke-width="1"/>
<rect x="176.5" y="229.5" width="10" height="27" fill="#000000" stroke="#18f418" stroke-width="1"/>
<line x1="197.5" y1="194" x2="197.5" y2="220" stroke="#18f418" stroke-width="1" />
<rect x="192.5" y="220.5" width="10" height="3" fill="#000000" stroke="#18f418" stroke-width="1"/>
<line x1="213.5" y1="174" x2="213.5" y2="215" stroke="#18f418" stroke-width="1" />
<line x1="213.5" y1="221" x2="213.5" y2="225" stroke="#18f418" stroke-width="1" />
<rect x="208.5" y="215.5" width="10" height="6" fill="#000000" stroke="#18f418" stroke-width="1"/>
<line x1="229.5" y1="198" x2="229.5" y2="205" stroke="#18f418" stroke-width="1" />
<rect x="224.5" y="194.5" width="10" height="4" fill="#000000" stroke="#18f418" stroke-width="1"/>
<line x1="245.5" y1="235" x2="245.5" y2="245" stroke="#18f418" stroke-width="1" />
<rect x="240.5" y="192.5" width="10" height="43" fill="#ffffff" stroke="#18f418" stroke-width="1"/>
<line x1="261.5" y1="210" x2="261.5" y2="228" stroke="#18f418" stroke-width="1" />
<rect x="256.5" y="228.5" width="10" height="17" fill="#000000" stroke="#18f418" stroke-width="1"/>
<line x1="277.5" y1="208" x2="277.5" y2="223" stroke="#18f418" stroke-width="1" />
<rect x="272.5" y="223.5" width="10" height="15" fill="#ffffff" stroke="#18f418" stroke-width="1"/>
<line x1="293.5" y1="252" x2="293.5" y2="265" stroke="#18f418" stroke-width="1" />
<rect x="288.5" y="239.5" width="10" height="13" fill="#ffffff" stroke="#18f418" stroke-width="1"/>
<line x1="309.5" y1="236" x2="309.5" y2="243" stroke="#18f418" stroke-width="1" />
<rect x="304.5" y="243.5" width="10" height="16" fill="#000000" stroke="#18f418" stroke-width="1"/>
<rect x="320.5" y="239.5" width="10" height="26" fill="#ffffff" stroke="#18f418" stroke-width="1"/>
<line x1="341.5" y1="233" x2="341.5" y2="238" stroke="#18f418" stroke-width="1" />
<rect x="336.5" y="238.5" width="10" height="20" fill="#000000" stroke="#18f418" stroke-width="1"/>
<line x1="357.5" y1="204" x2="357.5" y2="228" stroke="#18f418" stroke-width="1" />
<rect x="352.5" y="228.5" width="10" height="22" fill="#ffffff" stroke="#18f418" stroke-width="1"/>
<line x1="373.5" y1="251" x2="373.5" y2="257" stroke="#18f418" stroke-width="1" />
<line x1="373.5" y1="277" x2="373.5" y2="281" stroke="#18f418" stroke-width="1" />
<rect x="368.5" y="257.5" width="10" height="20" fill="#ffffff" stroke="#18f418" stroke-width="1"/>
<rect x="384.5" y="280.5" width="10" height="21" fill="#ffffff" stroke="#18f418" stroke-width="1"/>
<line x1="405.5" y1="268" x2="405.5" y2="298" stroke="#18f418" stroke-width="1" />
<rect x="400.5" y="298.5" width="10" height="6" fill="#ffffff" stroke="#18f418" stroke-width="1"/>
<rect x="416.5" y="280.5" width="10" height="36" fill="#000000" stroke="#18f418" stroke-width="1"/>
<line x1="437.5" y1="303" x2="437.5" y2="305" stroke="#18f418" stroke-width="1" />
<rect x="432.5" y="286.5" width="10" height="17" fill="#ffffff" stroke="#18f418" stroke-width="1"/>
<rect x="448.5" y="304.5" width="10" height="19" fill="#ffffff" stroke="#18f418" stroke-width="1"/>
<line x1="469.5" y1="316" x2="469.5" y2="320" stroke="#18f418" stroke-width="1" />
<line x1="469.5" y1="339" x2="469.5" y2="350" stroke="#18f418" stroke-width="1" />
<rect x="464.5" y="320.5" width="10" height="19" fill="#ffffff" stroke="#18f418" stroke-width="1"/>
<line x1="485.5" y1="290" x2="485.5" y2="339" stroke="#18f418" stroke-width="1" />
<rect x="480.5" y="339.5" width="10" height="15" fill="#000000" stroke="#18f418" stroke-width="1"/>
<line x1="501.5" y1="322" x2="501.5" y2="335" stroke="#18f418" stroke-width="1" />
<rect x="496.5" y="310.5" width="10" height="12" fill="#000000" stroke="#18f418" stroke-width="1"/>
<line x1="517.5" y1="314" x2="517.5" y2="329" stroke="#18f418" stroke-width="1" />
<rect x="512.5" y="310.5" width="10" height="4" fill="#000000" stroke="#18f418" stroke-width="1"/>
<line x1="533.5" y1="351" x2="533.5" y2="370" stroke="#18f418" stroke-width="1" />
<rect x="528.5" y="317.5" width="10" height="34" fill="#ffffff" stroke="#18f418" stroke-width="1"/>
<line x1="549.5" y1="397" x2="549.5" y2="407" stroke="#18f418" stroke-width="1" />
<rect x="544.5" y="349.5" width="10" height="48" fill="#ffffff" stroke="#18f418" stroke-width="1"/>
<line x1="565.5" y1="386" x2="565.5" y2="399" stroke="#18f418" stroke-width="1" />
<line x1="565.5" y1="399" x2="565.5" y2="425" stroke="#18f418" stroke-width="1" />
<line x1="560" y1="399.5" x2="571" y2="399.5" stroke="#18f418" stroke-width="1" />
<line x1="581.5" y1="409" x2="581.5" y2="413" stroke="#18f418" stroke-width="1" />
<rect x="576.5" y="351.5" width="10" height="58" fill="#000000" stroke="#18f418" stroke-width="1"/>
<line x1="597.5" y1="368" x2="597.5" y2="375" stroke="#18f418" stroke-width="1" />
<rect x="592.5" y="339.5" width="10" height="29" fill="#ffffff" stroke="#18f418" stroke-width="1"/>
<line x1="613.5" y1="372" x2="613.5" y2="384" stroke="#18f418" stroke-width="1" />
<rect x="608.5" y="367.5" width="10" height="5" fill="#ffffff" stroke="#18f418" stroke-width="1"/>
<line x1="629.5" y1="392" x2="629.5" y2="412" stroke="#18f418" stroke-width="1" />
<rect x="624.5" y="374.5" width="10" height="18" fill="#ffffff" stroke="#18f418" stroke-width="1"/>
<line x1="645.5" y1="374" x2="645.5" y2="381" stroke="#18f418" stroke-width="1" />
<line x1="645.5" y1="386" x2="645.5" y2="415" stroke="#18f418" stroke-width="1" />
<rect x="640.5" y="381.5" width="10" height="5" fill="#000000" stroke="#18f418" stroke-width="1"/>
<line x1="661.5" y1="384" x2="661.5" y2="387" stroke="#18f418" stroke-width="1" />
<line x1="661.5" y1="392" x2="661.5" y2="395" stroke="#18f418" stroke-width="1" />
<rect x="656.5" y="387.5" width="10" height="5" fill="#000000" stroke="#18f418" stroke-width="1"/>
<line x1="677.5" y1="415" x2="677.5" y2="425" stroke="#18f418" stroke-width="1" />
<rect x="672.5" y="380.5" width="10" height="35" fill="#ffffff" stroke="#18f418" stroke-width="1"/>
<line x1="693.5" y1="472" x2="693.5" y2="486" stroke="#18f418" stroke-width="1" />
<rect x="688.5" y="414.5" width="10" height="58" fill="#ffffff" stroke="#18f418" stroke-width="1"/>
<line x1="709.5" y1="474" x2="709.5" y2="492" stroke="#18f418" stroke-width="1" />
<rect x="704.5" y="462.5" width="10" height="12" fill="#000000" stroke="#18f418" stroke-width="1"/>
<line x1="725.5" y1="451" x2="725.5" y2="456" stroke="#18f418" stroke-width="1" />
<line x1="725.5" y1="456" x2="725.5" y2="471" stroke="#18f418" stroke-width="1" />
<line x1="720" y1="456.5" x2="731" y2="456.5" stroke="#18f418" stroke-width="1" />
<line x1="741.5" y1="480" x2="741.5" y2="485" stroke="#18f418" stroke-width="1" />
<rect x="736.5" y="462.5" width="10" height="18" fill="#ffffff" stroke="#18f418" stroke-width="1"/>
<line x1="757.5" y1="448" x2="757.5" y2="456" stroke="#18f418" stroke-width="1" />
<line x1="757.5" y1="486" x2="757.5" y2="491" stroke="#18f418" stroke-width="1" />
<rect x="752.5" y="456.5" width="10" height="30" fill="#000000" stroke="#18f418" stroke-width="1"/>
</g>
<polyline fill="none" shape-rendering="crispEdges" stroke="#9a3a36" stroke-width="1" stroke-linejoin="round" points="5.5,125.0 69.5,125.0 85.5,128.0 93.5,134.0 101.5,141.0 117.5,154.0 133.5,166.5 149.5,180.5 165.5,190.5 181.5,195.5 197.5,199.0 213.5,200.5 229.5,201.0 245.5,204.5 261.5,207.5 277.5,211.0 293.5,215.0 309.5,220.0 325.5,225.0 341.5,228.0 357.5,230.5 373.5,236.0 389.5,243.5 405.5,250.0 421.5,256.0 437.5,262.5 453.5,268.0 469.5,276.5 485.5,285.5 501.5,289.0 517.5,291.5 533.5,298.5 549.5,309.5 565.5,322.5 581.5,327.5 597.5,331.0 613.5,335.5 629.5,341.5 645.5,348.0 661.5,352.5 677.5,361.5 693.5,374.5 709.5,386.0 725.5,396.5 741.5,405.5 757.5,413.5" />
<polyline fill="none" shape-rendering="crispEdges" stroke="#e6e04a" stroke-width="1" stroke-linejoin="round" points="213.5,200.5 229.5,201.0 245.5,204.5" />
<polyline fill="none" shape-rendering="crispEdges" stroke="#f0f0f0" stroke-width="1" stroke-linejoin="round" points="5.5,153.5 85.5,153.5 101.5,145.5 117.5,149.5 133.5,161.0 149.5,161.5 165.5,166.5 389.5,166.5 405.5,173.5 421.5,175.5 437.5,181.5 453.5,182.0 469.5,184.5 485.5,196.5 490.5,198.5 501.5,200.5 533.5,200.5 549.5,208.0 565.5,225.5 581.5,234.5 694.5,234.5 709.5,266.0 725.5,268.5 741.5,286.0 757.5,288.5" />
<polyline fill="none" shape-rendering="crispEdges" stroke="#bdbdbd" stroke-width="1" stroke-linejoin="round" points="5.5,222.5 550.5,222.5 565.5,225.5 581.5,234.5 694.5,234.5 709.5,266.0 725.5,268.5 757.5,268.5" />
<polyline fill="none" shape-rendering="crispEdges" stroke="#d028d4" stroke-width="1" stroke-linejoin="round" points="5.5,161.5 69.5,161.5 85.5,174.0 101.5,190.5 117.5,202.5 133.5,216.0 149.5,230.0 165.5,237.0" />
<polyline fill="none" shape-rendering="crispEdges" stroke="#e6e04a" stroke-width="1" stroke-linejoin="round" points="165.5,237.0 181.5,235.5" />
<polyline fill="none" shape-rendering="crispEdges" stroke="#3ad03a" stroke-width="1" stroke-linejoin="round" points="181.5,235.5 197.5,232.0 213.5,229.0 229.5,220.5" />
<polyline fill="none" shape-rendering="crispEdges" stroke="#e6e04a" stroke-width="1" stroke-linejoin="round" points="229.5,220.5 245.5,224.0" />
<polyline fill="none" shape-rendering="crispEdges" stroke="#d028d4" stroke-width="1" stroke-linejoin="round" points="245.5,223.5 261.5,226.0 277.5,227.0 293.5,233.5 309.5,236.5 325.5,242.0" />
<polyline fill="none" shape-rendering="crispEdges" stroke="#e6e04a" stroke-width="1" stroke-linejoin="round" points="325.5,242.0 341.5,241.5 357.5,243.0" />
<polyline fill="none" shape-rendering="crispEdges" stroke="#d028d4" stroke-width="1" stroke-linejoin="round" points="357.5,243.0 373.5,243.0 389.5,245.5 405.5,251.0 421.5,256.0 437.5,268.5 453.5,281.5 469.5,294.0 485.5,304.0 501.5,306.5 517.5,308.5 533.5,320.0 549.5,335.0 565.5,350.0 581.5,351.5 597.5,356.0 613.5,361.5 629.5,366.5 645.5,370.0 661.5,373.0 677.5,381.5 693.5,403.0 709.5,418.5 725.5,428.0 741.5,440.0 757.5,443.5" />
<line x1="325.5" y1="105" x2="325.5" y2="504" stroke="#d41e1e" stroke-width="1" shape-rendering="crispEdges"/>
</g>
<g shape-rendering="crispEdges">
<line x1="4.5" y1="104" x2="4.5" y2="508" stroke="#ffffff" stroke-width="1" />
<line x1="4" y1="104.5" x2="759" y2="104.5" stroke="#ffffff" stroke-width="1" />
<line x1="758.5" y1="104" x2="758.5" y2="505" stroke="#ffffff" stroke-width="1" />
<line x1="4" y1="504.5" x2="759" y2="504.5" stroke="#ffffff" stroke-width="1" />
<line x1="759" y1="114.5" x2="762" y2="114.5" stroke="#ffffff" stroke-width="1" />
<line x1="759" y1="147.5" x2="762" y2="147.5" stroke="#ffffff" stroke-width="1" />
<line x1="759" y1="179.5" x2="762" y2="179.5" stroke="#ffffff" stroke-width="1" />
<line x1="759" y1="211.5" x2="762" y2="211.5" stroke="#ffffff" stroke-width="1" />
<line x1="759" y1="243.5" x2="762" y2="243.5" stroke="#ffffff" stroke-width="1" />
<line x1="759" y1="276.5" x2="762" y2="276.5" stroke="#ffffff" stroke-width="1" />
<line x1="759" y1="308.5" x2="762" y2="308.5" stroke="#ffffff" stroke-width="1" />
<line x1="759" y1="340.5" x2="762" y2="340.5" stroke="#ffffff" stroke-width="1" />
<line x1="759" y1="372.5" x2="762" y2="372.5" stroke="#ffffff" stroke-width="1" />
<line x1="759" y1="405.5" x2="762" y2="405.5" stroke="#ffffff" stroke-width="1" />
<line x1="759" y1="437.5" x2="762" y2="437.5" stroke="#ffffff" stroke-width="1" />
<line x1="759" y1="469.5" x2="762" y2="469.5" stroke="#ffffff" stroke-width="1" />
<line x1="759" y1="501.5" x2="762" y2="501.5" stroke="#ffffff" stroke-width="1" />
<line x1="69.5" y1="505" x2="69.5" y2="508" stroke="#ffffff" stroke-width="1" />
<line x1="133.5" y1="505" x2="133.5" y2="508" stroke="#ffffff" stroke-width="1" />
<line x1="197.5" y1="505" x2="197.5" y2="508" stroke="#ffffff" stroke-width="1" />
<line x1="261.5" y1="505" x2="261.5" y2="508" stroke="#ffffff" stroke-width="1" />
<line x1="325.5" y1="505" x2="325.5" y2="508" stroke="#ffffff" stroke-width="1" />
<line x1="389.5" y1="505" x2="389.5" y2="508" stroke="#ffffff" stroke-width="1" />
<line x1="453.5" y1="505" x2="453.5" y2="508" stroke="#ffffff" stroke-width="1" />
<line x1="517.5" y1="505" x2="517.5" y2="508" stroke="#ffffff" stroke-width="1" />
<line x1="581.5" y1="505" x2="581.5" y2="508" stroke="#ffffff" stroke-width="1" />
<line x1="645.5" y1="505" x2="645.5" y2="508" stroke="#ffffff" stroke-width="1" />
<line x1="709.5" y1="505" x2="709.5" y2="508" stroke="#ffffff" stroke-width="1" />
</g>
<rect x="8" y="107" width="200" height="11" fill="#000000" />
<text x="9" y="115.8" font-size="9.5" fill="#fff" textLength="49.5" lengthAdjust="spacingAndGlyphs" stroke="#ffffff" stroke-width="0.3">EURJPY,M1</text>
<text x="67" y="115.8" font-size="9.5" fill="#fff" textLength="32" lengthAdjust="spacingAndGlyphs" stroke="#ffffff" stroke-width="0.3">158.994</text>
<text x="102.5" y="115.8" font-size="9.5" fill="#fff" textLength="32" lengthAdjust="spacingAndGlyphs" stroke="#ffffff" stroke-width="0.3">159.032</text>
<text x="138.2" y="115.8" font-size="9.5" fill="#fff" textLength="32" lengthAdjust="spacingAndGlyphs" stroke="#ffffff" stroke-width="0.3">158.992</text>
<text x="174.2" y="115.8" font-size="9.5" fill="#fff" textLength="32" lengthAdjust="spacingAndGlyphs" stroke="#ffffff" stroke-width="0.3">159.032</text>
<text x="765" y="116.8" font-size="9.5" fill="#fff" textLength="31" lengthAdjust="spacingAndGlyphs" stroke="#ffffff" stroke-width="0.3">159.065</text>
<text x="765" y="149.8" font-size="9.5" fill="#fff" textLength="31" lengthAdjust="spacingAndGlyphs" stroke="#ffffff" stroke-width="0.3">159.010</text>
<text x="765" y="181.8" font-size="9.5" fill="#fff" textLength="31" lengthAdjust="spacingAndGlyphs" stroke="#ffffff" stroke-width="0.3">158.955</text>
<text x="765" y="213.8" font-size="9.5" fill="#fff" textLength="31" lengthAdjust="spacingAndGlyphs" stroke="#ffffff" stroke-width="0.3">158.900</text>
<text x="765" y="245.8" font-size="9.5" fill="#fff" textLength="31" lengthAdjust="spacingAndGlyphs" stroke="#ffffff" stroke-width="0.3">158.845</text>
<text x="765" y="278.8" font-size="9.5" fill="#fff" textLength="31" lengthAdjust="spacingAndGlyphs" stroke="#ffffff" stroke-width="0.3">158.790</text>
<text x="765" y="310.8" font-size="9.5" fill="#fff" textLength="31" lengthAdjust="spacingAndGlyphs" stroke="#ffffff" stroke-width="0.3">158.735</text>
<text x="765" y="342.8" font-size="9.5" fill="#fff" textLength="31" lengthAdjust="spacingAndGlyphs" stroke="#ffffff" stroke-width="0.3">158.680</text>
<text x="765" y="374.8" font-size="9.5" fill="#fff" textLength="31" lengthAdjust="spacingAndGlyphs" stroke="#ffffff" stroke-width="0.3">158.625</text>
<text x="765" y="407.8" font-size="9.5" fill="#fff" textLength="31" lengthAdjust="spacingAndGlyphs" stroke="#ffffff" stroke-width="0.3">158.570</text>
<text x="765" y="439.8" font-size="9.5" fill="#fff" textLength="31" lengthAdjust="spacingAndGlyphs" stroke="#ffffff" stroke-width="0.3">158.515</text>
<text x="765" y="471.8" font-size="9.5" fill="#fff" textLength="31" lengthAdjust="spacingAndGlyphs" stroke="#ffffff" stroke-width="0.3">158.460</text>
<text x="765" y="503.8" font-size="9.5" fill="#fff" textLength="31" lengthAdjust="spacingAndGlyphs" stroke="#ffffff" stroke-width="0.3">158.405</text>
<rect x="761" y="113" width="37" height="11" fill="#f41414" />
<text x="765" y="122.0" font-size="9.5" fill="#3a0000" textLength="31" lengthAdjust="spacingAndGlyphs" stroke="#3a0000" stroke-width="0.2">159.057</text>
<rect x="761" y="128" width="37" height="11" fill="#ffffff" />
<text x="765" y="137.3" font-size="9.5" fill="#000" textLength="31" lengthAdjust="spacingAndGlyphs" stroke="#000" stroke-width="0.25">159.032</text>
<text x="4" y="517.4" font-size="9.5" fill="#fff" textLength="51" lengthAdjust="spacingAndGlyphs" stroke="#ffffff" stroke-width="0.3">22 Feb 2008</text>
<text x="68" y="517.4" font-size="9.5" fill="#fff" textLength="54" lengthAdjust="spacingAndGlyphs" stroke="#ffffff" stroke-width="0.3">22 Feb 14:42</text>
<text x="132" y="517.4" font-size="9.5" fill="#fff" textLength="54" lengthAdjust="spacingAndGlyphs" stroke="#ffffff" stroke-width="0.3">22 Feb 14:46</text>
<text x="196" y="517.4" font-size="9.5" fill="#fff" textLength="54" lengthAdjust="spacingAndGlyphs" stroke="#ffffff" stroke-width="0.3">22 Feb 14:50</text>
<text x="260" y="517.4" font-size="9.5" fill="#fff" textLength="54" lengthAdjust="spacingAndGlyphs" stroke="#ffffff" stroke-width="0.3">22 Feb 14:54</text>
<text x="324" y="517.4" font-size="9.5" fill="#fff" textLength="54" lengthAdjust="spacingAndGlyphs" stroke="#ffffff" stroke-width="0.3">22 Feb 14:58</text>
<text x="388" y="517.4" font-size="9.5" fill="#fff" textLength="54" lengthAdjust="spacingAndGlyphs" stroke="#ffffff" stroke-width="0.3">22 Feb 15:02</text>
<text x="452" y="517.4" font-size="9.5" fill="#fff" textLength="54" lengthAdjust="spacingAndGlyphs" stroke="#ffffff" stroke-width="0.3">22 Feb 15:06</text>
<text x="516" y="517.4" font-size="9.5" fill="#fff" textLength="54" lengthAdjust="spacingAndGlyphs" stroke="#ffffff" stroke-width="0.3">22 Feb 15:10</text>
<text x="580" y="517.4" font-size="9.5" fill="#fff" textLength="54" lengthAdjust="spacingAndGlyphs" stroke="#ffffff" stroke-width="0.3">22 Feb 15:14</text>
<text x="644" y="517.4" font-size="9.5" fill="#fff" textLength="54" lengthAdjust="spacingAndGlyphs" stroke="#ffffff" stroke-width="0.3">22 Feb 15:18</text>
<text x="708" y="517.4" font-size="9.5" fill="#fff" textLength="54" lengthAdjust="spacingAndGlyphs" stroke="#ffffff" stroke-width="0.3">22 Feb 15:22</text>
<rect x="286" y="508" width="78" height="12" fill="#f41414" />
<text x="289" y="517.4" font-size="9.5" fill="#3a0000" textLength="71" lengthAdjust="spacingAndGlyphs" stroke="#3a0000" stroke-width="0.2">2008.02.22 14:58</text>
<rect x="0" y="525" width="800" height="20" fill="#ece9d8" />
<rect x="0" y="525" width="800" height="1" fill="#4a4a46" />
<rect x="0.5" y="526" width="1.5" height="18" fill="#9a978a" />
<text x="16" y="538" font-size="11.2" fill="#7f7d73" textLength="54.5" lengthAdjust="spacingAndGlyphs">GBPUSD,H4</text>
<text x="96" y="538" font-size="11.2" fill="#7f7d73" textLength="54.5" lengthAdjust="spacingAndGlyphs">GBPUSD,H4</text>
<text x="176" y="538" font-size="11.2" fill="#7f7d73" textLength="54.5" lengthAdjust="spacingAndGlyphs">GBPUSD,H4</text>
<text x="255" y="538" font-size="11.2" fill="#7f7d73" textLength="56" lengthAdjust="spacingAndGlyphs">GBPUSD,M5</text>
<text x="334.5" y="538" font-size="11.2" fill="#7f7d73" textLength="56.5" lengthAdjust="spacingAndGlyphs">GBPUSD,M5</text>
<rect x="84" y="528" width="1" height="13" fill="#8a887c" />
<rect x="164" y="528" width="1" height="13" fill="#8a887c" />
<rect x="244" y="528" width="1" height="13" fill="#8a887c" />
<rect x="324" y="528" width="1" height="13" fill="#8a887c" />
<path d="M404.5 524 V542.5 H480.5 V524" fill="#ffffff" stroke="#000" stroke-width="1.4"/>
<rect x="405.2" y="523" width="74.6" height="3.5" fill="#ffffff" />
<text x="413.5" y="538" font-size="11.2" fill="#000" textLength="53.5" lengthAdjust="spacingAndGlyphs">EURJPY,M1</text>
<path d="M775.5 532.5 v6 l-3.500 -3 z M788.500 532.500 v6 l3.500 -3 z" fill="#aaa79a"/>
<rect x="0" y="545" width="800" height="1" fill="#ffffff" />
<rect x="0" y="546" width="800" height="20" fill="#ece9d8" />
<rect x="80" y="549" width="1" height="16" fill="#b9b5a4" />
<rect x="81" y="549" width="1" height="16" fill="#ffffff" />
<rect x="361" y="549" width="1" height="16" fill="#b9b5a4" />
<rect x="362" y="549" width="1" height="16" fill="#ffffff" />
<rect x="433" y="549" width="1" height="16" fill="#b9b5a4" />
<rect x="434" y="549" width="1" height="16" fill="#ffffff" />
<rect x="502" y="549" width="1" height="16" fill="#b9b5a4" />
<rect x="503" y="549" width="1" height="16" fill="#ffffff" />
<rect x="638" y="549" width="1" height="16" fill="#b9b5a4" />
<rect x="639" y="549" width="1" height="16" fill="#ffffff" />
<text x="2" y="560.6" font-size="11.2" fill="#000" textLength="74" lengthAdjust="spacingAndGlyphs">Pre nápovedu s</text>
<text x="85" y="560.6" font-size="11.2" fill="#000" textLength="38" lengthAdjust="spacingAndGlyphs">23jan08</text>
<text x="694" y="560.6" font-size="11.2" fill="#000" textLength="42" lengthAdjust="spacingAndGlyphs">921/0 kb</text>
<rect x="644.0" y="551" width="2" height="8" fill="#55861c" />
<rect x="644.0" y="560" width="2" height="3" fill="#981608" />
<rect x="646.9" y="551" width="2" height="7" fill="#55861c" />
<rect x="646.9" y="559" width="2" height="4" fill="#981608" />
<rect x="649.8" y="551" width="2" height="6" fill="#55861c" />
<rect x="649.8" y="558" width="2" height="5" fill="#981608" />
<rect x="652.7" y="551" width="2" height="5" fill="#55861c" />
<rect x="652.7" y="557" width="2" height="6" fill="#981608" />
<rect x="655.6" y="551" width="2" height="4" fill="#55861c" />
<rect x="655.6" y="556" width="2" height="7" fill="#981608" />
<rect x="658.5" y="551" width="2" height="3" fill="#55861c" />
<rect x="658.5" y="555" width="2" height="8" fill="#981608" />
<rect x="661.4" y="551" width="2" height="2" fill="#55861c" />
<rect x="661.4" y="554" width="2" height="9" fill="#981608" />
<rect x="664.3" y="551" width="2" height="1" fill="#55861c" />
<rect x="664.3" y="553" width="2" height="10" fill="#981608" />
<path d="M796 565 L799 562" stroke="#b8b4a2" stroke-width="1.3"/>
<path d="M797 566 L800 563" stroke="#ffffff" stroke-width="0.8"/>
<path d="M792 565 L799 558" stroke="#b8b4a2" stroke-width="1.3"/>
<path d="M793 566 L800 559" stroke="#ffffff" stroke-width="0.8"/>
<path d="M788 565 L799 554" stroke="#b8b4a2" stroke-width="1.3"/>
<path d="M789 566 L800 555" stroke="#ffffff" stroke-width="0.8"/>
<path d="M784 565 L799 550" stroke="#b8b4a2" stroke-width="1.3"/>
<path d="M785 566 L800 551" stroke="#ffffff" stroke-width="0.8"/>
<rect x="0" y="566" width="800" height="34" fill="url(#gTask)" />
<path d="M0 570 H84 Q96 572 97 585 Q96.500 598 86 600 H0 Z" fill="url(#gStart)"/>
<path d="M0 570.500 H84 Q95 572.500 96.500 584" fill="none" stroke="#2a6e2a" stroke-width="1" opacity="0.8"/>
<path d="M2 572.500 H83 Q92 574 94 582" fill="none" stroke="#86d07e" stroke-width="1.600" opacity="0.55"/>
<path d="M88 571 Q99.500 585 88 600 L100 600 Q103 585 97 572 Z" fill="#173a9a" opacity="0.45"/>
<g transform="translate(11.2,576) scale(1.04)">
<path d="M1.500 1.800 Q5 -0.500 8.300 1.600 L7.200 7.600 Q4 5.800 0.500 7.800 Z" fill="#e8562a"/>
<path d="M9.600 2.200 Q13 4.200 17.500 1.800 L16.300 8 Q12 10.200 8.500 8.200 Z" fill="#6cc04a"/>
<path d="M0.200 9 Q3.800 7 7 8.900 L5.800 15 Q2.500 13 -1 15.200 Z" fill="#3a7be0"/>
<path d="M8.200 9.500 Q12 11.500 16 9.300 L14.800 15.500 Q11 17.600 7 15.600 Z" fill="#f6c62a"/>
</g>
<text x="35.6" y="591.2" font-size="18.5" fill="#1a4a1a" textLength="37" lengthAdjust="spacingAndGlyphs" font-weight="bold" font-style="italic" opacity="0.6">štart</text>
<text x="34.8" y="590.2" font-size="18.5" fill="#ffffff" textLength="37" lengthAdjust="spacingAndGlyphs" font-weight="bold" font-style="italic">štart</text>
<rect x="107" y="576.5" width="2" height="2" fill="#1a3fa4" />
<rect x="108" y="577.5" width="1.5" height="1.5" fill="#5f92f2" />
<rect x="109.5" y="579.5" width="2" height="2" fill="#1a3fa4" />
<rect x="110.5" y="580.5" width="1.5" height="1.5" fill="#5f92f2" />
<rect x="107" y="582.5" width="2" height="2" fill="#1a3fa4" />
<rect x="108" y="583.5" width="1.5" height="1.5" fill="#5f92f2" />
<rect x="109.5" y="585.5" width="2" height="2" fill="#1a3fa4" />
<rect x="110.5" y="586.5" width="1.5" height="1.5" fill="#5f92f2" />
<rect x="107" y="588.5" width="2" height="2" fill="#1a3fa4" />
<rect x="108" y="589.5" width="1.5" height="1.5" fill="#5f92f2" />
<rect x="109.5" y="591.5" width="2" height="2" fill="#1a3fa4" />
<rect x="110.5" y="592.5" width="1.5" height="1.5" fill="#5f92f2" />
<rect x="107" y="594.5" width="2" height="2" fill="#1a3fa4" />
<rect x="108" y="595.5" width="1.5" height="1.5" fill="#5f92f2" />
<g><circle cx="127" cy="584.500" r="7.400" fill="#e9781c"/><path d="M121 588 q3 4.500 8.500 3.300 q4 -1.500 4.800 -5.500 q-2 3 -5.500 3.300 q-4 0.300 -7.800 -1.100 z" fill="#f6a62a"/><circle cx="128.200" cy="583.200" r="4.700" fill="#3b5fcc"/><path d="M126 580 q2 -1.500 4.500 -0.800 q-1 1.500 0.500 2.500 q-2 1 -3 -0.200 z" fill="#6f92e6"/><path d="M120.300 581.200 q2.800 -1.200 5 0.800 q1.600 1.800 0.200 3.700 q-1.800 1.500 -4.200 0.300 q-1.500 -2 -1 -4.800 z" fill="#f29420"/><path d="M121.300 579.800 l1.800 1.600 l-2.300 0.600 z" fill="#f6b23a"/></g>
<text x="142.5" y="591.8" font-size="22" fill="#2a86e8" textLength="14.5" lengthAdjust="spacingAndGlyphs" font-weight="bold" font-style="italic" stroke="#5fb0f6" stroke-width="0.400">e</text>
<path d="M141.800 589.500 q1.500 -9 15.500 -11.500 q-9 3.500 -12 9.500" fill="#7ec4fa" stroke="#e8c85a" stroke-width="0.500"/>
<g><circle cx="172.500" cy="584.800" r="7.200" fill="#2c4fa8"/><path d="M165.500 583 q2 -6.500 9.500 -6 q4.500 1 5 5.500 q-3 -2.500 -7 -1.500 q-4.500 0.500 -7.500 2 z" fill="#5b8be0"/><path d="M167.500 585.500 q5 -3 9.500 0 v4.300 q-5 2 -9.500 0 z" fill="#f6f0e2"/><path d="M167.500 585.500 l4.800 3 l4.700 -3" stroke="#c8a24a" stroke-width="0.8" fill="none"/><path d="M166 584.500 q2.500 -2.500 6 -0.500" stroke="#e8862a" stroke-width="1.700" fill="none"/><circle cx="170" cy="581" r="0.900" fill="#fff"/></g>
<g transform="translate(191,580)"><path d="M0.500 3 L4 0.500 L13.500 0.500 L13 8 L1 8.300 Z" fill="#c9d3e4" stroke="#8fa2c4" stroke-width="0.6"/><path d="M2 3.300 L5 1.300 L12.500 1.300 L12 4 Z" fill="#f4f7fb"/><path d="M6.500 8 V11.500 M4 12.500 H9.500" stroke="#9db0d2" stroke-width="1.300" fill="none"/></g>
<path d="M219 577 q4 2 8 1.500 q0.500 9 -8 13.500 q-8.500 -4.500 -8 -13.500 q4 0.500 8 -1.500 z" fill="#2a6ac8" stroke="#e4f0ff" stroke-width="1.300"/><path d="M219 579 v11 M215 580.500 q-0.500 6 4 9 M223 580.500 q0.500 6 -4 9" stroke="#e4f0ff" stroke-width="1.100" fill="none"/>
<g><rect x="236.500" y="577.500" width="10" height="14" rx="1" fill="#9cc0f0" stroke="#4a78c0" stroke-width="0.8"/><rect x="238" y="579" width="7" height="3" fill="#e4f0e4"/><path d="M238.500 584.500 h6 M238.500 586.800 h6 M238.500 589 h6" stroke="#e8f0fb" stroke-width="1.200" stroke-dasharray="1.400 0.900"/></g>
<g><rect x="257" y="577" width="16" height="15" fill="#b9b4f0"/><path d="M259.500 579 v11.500 h11" stroke="#15152a" stroke-width="1.600" fill="none"/><path d="M262 579 q8 1 9.500 9" stroke="#15152a" stroke-width="1.200" fill="none"/><rect x="265.500" y="583" width="3.500" height="3.500" fill="#15152a"/></g>
<g><ellipse cx="290" cy="584.5" rx="5.800" ry="7.600" fill="#d8201a"/><ellipse cx="290" cy="584.5" rx="2.500" ry="5.300" fill="#f4f4f8"/><ellipse cx="288.5" cy="583.5" rx="5" ry="6.500" fill="none" stroke="#f07a6a" stroke-width="0.700" opacity="0.600"/></g>
<g><rect x="304.500" y="577.500" width="12" height="14" rx="1.500" fill="#e8f4ff" stroke="#2a7ad8" stroke-width="1.300"/><path d="M307 581 h7 M307 584 h5 M307 587 h7" stroke="#2a6ac8" stroke-width="1.200"/><circle cx="316.500" cy="580.500" r="1.800" fill="#e23a1e"/></g>
<rect x="329" y="576.5" width="2" height="2" fill="#1a3fa4" />
<rect x="330" y="577.5" width="1.5" height="1.5" fill="#5f92f2" />
<rect x="331.5" y="579.5" width="2" height="2" fill="#1a3fa4" />
<rect x="332.5" y="580.5" width="1.5" height="1.5" fill="#5f92f2" />
<rect x="329" y="582.5" width="2" height="2" fill="#1a3fa4" />
<rect x="330" y="583.5" width="1.5" height="1.5" fill="#5f92f2" />
<rect x="331.5" y="585.5" width="2" height="2" fill="#1a3fa4" />
<rect x="332.5" y="586.5" width="1.5" height="1.5" fill="#5f92f2" />
<rect x="329" y="588.5" width="2" height="2" fill="#1a3fa4" />
<rect x="330" y="589.5" width="1.5" height="1.5" fill="#5f92f2" />
<rect x="331.5" y="591.5" width="2" height="2" fill="#1a3fa4" />
<rect x="332.5" y="592.5" width="1.5" height="1.5" fill="#5f92f2" />
<rect x="329" y="594.5" width="2" height="2" fill="#1a3fa4" />
<rect x="330" y="595.5" width="1.5" height="1.5" fill="#5f92f2" />
<rect x="340" y="574" width="82.5" height="24" rx="2.500" fill="url(#gTB)" stroke="#2a62d0" stroke-width="0.800"/>
<g transform="translate(184,0)"><circle cx="172.500" cy="584.800" r="7.200" fill="#2c4fa8"/><path d="M165.500 583 q2 -6.500 9.500 -6 q4.500 1 5 5.500 q-3 -2.500 -7 -1.500 q-4.500 0.500 -7.500 2 z" fill="#5b8be0"/><path d="M167.500 585.500 q5 -3 9.500 0 v4.300 q-5 2 -9.500 0 z" fill="#f6f0e2"/><path d="M167.500 585.500 l4.800 3 l4.700 -3" stroke="#c8a24a" stroke-width="0.8" fill="none"/><path d="M166 584.500 q2.500 -2.500 6 -0.500" stroke="#e8862a" stroke-width="1.700" fill="none"/><circle cx="170" cy="581" r="0.900" fill="#fff"/></g>
<text x="368" y="589" font-size="11.2" fill="#fff" textLength="39.5" lengthAdjust="spacingAndGlyphs">Doruč...</text>
<rect x="424" y="574" width="82" height="24" rx="2.500" fill="url(#gTBa)" stroke="#123a9a" stroke-width="1"/>
<g transform="translate(436,579)"><path d="M0.500 3 L4 0.500 L13.500 0.500 L13 8 L1 8.300 Z" fill="#c9d3e4" stroke="#8fa2c4" stroke-width="0.6"/><path d="M2 3.300 L5 1.300 L12.500 1.300 L12 4 Z" fill="#f4f7fb"/><path d="M6.500 8 V11.500 M4 12.500 H9.500" stroke="#9db0d2" stroke-width="1.300" fill="none"/></g>
<text x="454" y="589" font-size="11.2" fill="#fff" textLength="34" lengthAdjust="spacingAndGlyphs">9001...</text>
<rect x="507.5" y="574" width="82.0" height="24" rx="2.500" fill="url(#gTB)" stroke="#2a62d0" stroke-width="0.800"/>
<g><ellipse cx="526" cy="585" rx="5.800" ry="7.600" fill="#d8201a"/><ellipse cx="526" cy="585" rx="2.500" ry="5.300" fill="#f4f4f8"/><ellipse cx="524.5" cy="584" rx="5" ry="6.500" fill="none" stroke="#f07a6a" stroke-width="0.700" opacity="0.600"/></g>
<text x="537" y="589" font-size="11.2" fill="#fff" textLength="38" lengthAdjust="spacingAndGlyphs">798:4...</text>
<rect x="591" y="574" width="83.5" height="24" rx="2.500" fill="url(#gTB)" stroke="#2a62d0" stroke-width="0.800"/>
<g><rect x="601" y="577" width="15" height="16" fill="#0a0a14"/><rect x="602" y="580" width="6.500" height="5" fill="#f0442a"/><rect x="608.500" y="580" width="6.500" height="5" fill="#8ed42a"/><rect x="602" y="585" width="6.500" height="5" fill="#f29a22"/><rect x="608.500" y="585" width="6.500" height="5" fill="#38c4b0"/><circle cx="608.500" cy="585" r="3" fill="#f6e23a" opacity="0.85"/><path d="M602.500 578.500 h13 M602.500 591.500 h13" stroke="#e8e8f0" stroke-width="1" stroke-dasharray="1 1.500"/></g>
<text x="621" y="589" font-size="11.2" fill="#fff" textLength="38" lengthAdjust="spacingAndGlyphs">Photo...</text>
<rect x="690" y="570" width="110" height="30" fill="url(#gTray)" />
<rect x="689" y="570" width="1" height="30" fill="#123f9e" />
<rect x="690" y="569" width="110" height="1" fill="#1a50b4" />
<rect x="690" y="571" width="1" height="29" fill="#3ab4f6" />
<rect x="701" y="578.5" width="7" height="6.5" fill="#f4e01a" />
<rect x="708" y="578.5" width="7" height="6.5" fill="#000000" />
<rect x="701" y="585" width="7" height="6.5" fill="#0a8c0a" />
<rect x="708" y="585" width="7" height="6.5" fill="#f41a1a" />
<g><rect x="722.500" y="577.500" width="8.500" height="7" fill="#4a66b8" stroke="#c8d4f0" stroke-width="1"/><rect x="718.500" y="581.500" width="8.500" height="7" fill="#3a56a8" stroke="#c8d4f0" stroke-width="1"/><path d="M720 591.500 h6 M726 587.500 h4" stroke="#d8e0f4" stroke-width="1.400"/></g>
<rect x="736" y="577" width="8" height="15.5" fill="#8a1420" />
<rect x="744" y="577" width="8" height="15.5" fill="#f4d81a" />
<text x="736.8" y="590" font-size="13" fill="#ffffff" textLength="6.5" lengthAdjust="spacingAndGlyphs" font-weight="bold">Z</text>
<text x="744.8" y="590" font-size="13" fill="#8a1420" textLength="6.5" lengthAdjust="spacingAndGlyphs" font-weight="bold">A</text>
<text x="760" y="588.6" font-size="11.2" fill="#fff" textLength="26" lengthAdjust="spacingAndGlyphs">10:20</text>
</svg></body></html>
